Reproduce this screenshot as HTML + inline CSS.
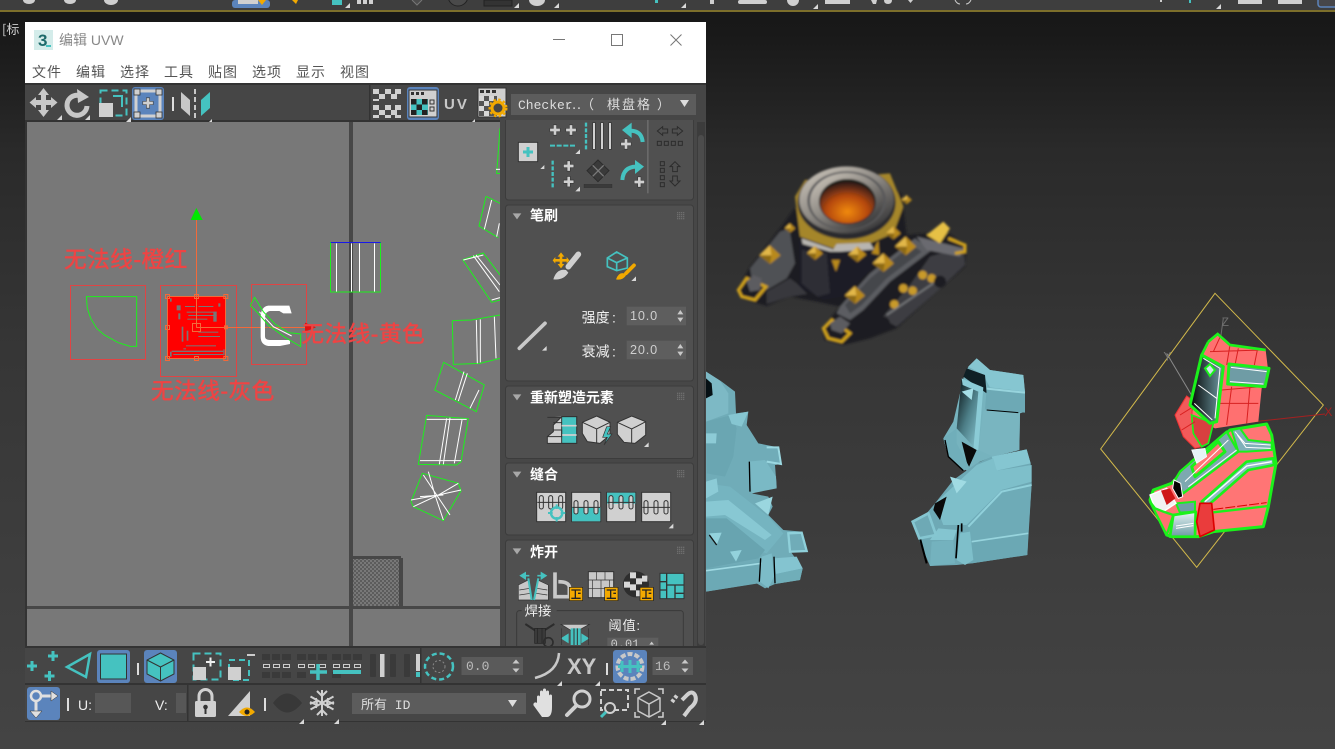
<!DOCTYPE html>
<html><head><meta charset="utf-8"><style>
html,body{margin:0;padding:0;width:1335px;height:749px;overflow:hidden;background:#222}
svg{display:block}
text{font-family:"Liberation Sans","Noto Sans CJK SC",sans-serif}
.m{font-family:"Liberation Mono","Noto Sans CJK SC",monospace}
.c{font-family:"Noto Sans CJK SC","Liberation Sans",sans-serif}
</style></head><body>
<svg width="1335" height="749" viewBox="0 0 1335 749" xmlns="http://www.w3.org/2000/svg">
<defs>
<linearGradient id="bg" gradientUnits="userSpaceOnUse" x1="0" y1="12" x2="0" y2="749"><stop offset="0" stop-color="#181818"/><stop offset=".03" stop-color="#191919"/><stop offset=".19" stop-color="#2a2a2a"/><stop offset=".46" stop-color="#363636"/><stop offset=".8" stop-color="#3f3f3f"/><stop offset="1" stop-color="#444"/></linearGradient>
<radialGradient id="fire" cx=".5" cy=".72" r=".7"><stop offset="0" stop-color="#f08a10"/><stop offset=".55" stop-color="#b5480f"/><stop offset="1" stop-color="#331c18"/></radialGradient>
<linearGradient id="ringg" x1="0" y1="0" x2=".8" y2="1"><stop offset="0" stop-color="#d2cbc0"/><stop offset=".5" stop-color="#8f8b85"/><stop offset="1" stop-color="#333335"/></linearGradient>
<linearGradient id="blk" x1="0" y1="0" x2="1" y2="0"><stop offset="0" stop-color="#050505"/><stop offset="1" stop-color="#6f9da5"/></linearGradient>
<linearGradient id="blk2" x1="0" y1=".1" x2=".8" y2=".85"><stop offset="0" stop-color="#0a1518"/><stop offset=".55" stop-color="#4d7e87"/><stop offset="1" stop-color="#7db9c4"/></linearGradient>
<linearGradient id="boxg" x1="0" y1="0" x2="0" y2="1"><stop offset="0" stop-color="#e8f4f5"/><stop offset="1" stop-color="#6b9aa3"/></linearGradient>
<pattern id="chk" width="4" height="4" patternUnits="userSpaceOnUse"><rect width="4" height="4" fill="#787878"/><rect width="2" height="2" fill="#5c5c5c"/><rect x="2" y="2" width="2" height="2" fill="#5c5c5c"/></pattern>
<filter id="bl2" x="-5%" y="-5%" width="110%" height="110%"><feGaussianBlur stdDeviation="3.500"/></filter>
<clipPath id="cv"><rect x="27" y="122" width="473" height="525"/></clipPath>
<clipPath id="pn"><rect x="500" y="120" width="206" height="527"/></clipPath>
<clipPath id="vp"><rect x="706" y="0" width="629" height="749"/></clipPath>
<path id="tri" d="M0 0l-5 5h5z" fill="#d8d8d8"/>
<path id="pl" d="M-2-6.500h4v4.500h4.500v4h-4.500v4.500h-4v-4.500h-4.500v-4h4.500z" fill="#d0d0d0" stroke="#333" stroke-width=".7"/>
<path id="plt" d="M-1.500-5h3v3.500h3.500v3h-3.500v3.500h-3v-3.500h-3.500v-3h3.500z" fill="#45c2c0"/>
<g id="grip" fill="#6d6d6d"><rect x="-10" y="-10" width="4" height="4"/><rect x="-4" y="-10" width="4" height="4"/><rect x="2" y="-10" width="4" height="4"/><rect x="8" y="-10" width="4" height="4"/><rect x="-10" y="-4" width="4" height="4"/><rect x="-4" y="-4" width="4" height="4"/><rect x="2" y="-4" width="4" height="4"/><rect x="8" y="-4" width="4" height="4"/><rect x="-10" y="2" width="4" height="4"/><rect x="-4" y="2" width="4" height="4"/><rect x="2" y="2" width="4" height="4"/><rect x="8" y="2" width="4" height="4"/><rect x="-10" y="8" width="4" height="4"/><rect x="-4" y="8" width="4" height="4"/><rect x="2" y="8" width="4" height="4"/><rect x="8" y="8" width="4" height="4"/></g>
<g id="pyr"><path d="M-32 0L0-30L32 0L0 26z" fill="#b8891e"/><path d="M-32 0L0-30L4 0z" fill="#e2b748"/><path d="M4 0L0 26L-32 0z" fill="#8d6a18"/></g>
<path id="stud" d="M-13 0a13 13 0 1 1 26 0a13 13 0 1 1-26 0" fill="#c89a2a"/>
</defs>

<!-- viewport background -->
<rect width="1335" height="749" fill="url(#bg)"/>
<rect x="0" y="0" width="1335" height="10" fill="#3e3e3e"/>
<rect x="0" y="10" width="1335" height="2" fill="#7d6f2b"/>
<!-- top toolbar remnants -->
<g fill="#cfcfcf"><ellipse cx="29" cy="0" rx="6" ry="4"/><ellipse cx="70" cy="0" rx="6" ry="4"/><ellipse cx="111" cy="0" rx="7" ry="5"/><ellipse cx="537" cy="0" rx="8" ry="6"/></g>
<rect x="232" y="0" width="38" height="8" rx="3" fill="#5b84bc"/><rect x="238" y="0" width="20" height="4" fill="#d0d0d0"/><path d="M258 0l4 5 4-5z" fill="#f2a900"/>
<path d="M292 0l4 4 2-4z" fill="#f2a900"/><rect x="332" y="0" width="10" height="5" fill="#45c2c0"/><use href="#tri" x="350" y="3"/>
<g fill="#d0d0d0"><rect x="357" y="0" width="4" height="4"/><rect x="363" y="0" width="4" height="4"/><rect x="369" y="0" width="4" height="4"/></g>
<path d="M412 0l5 5 5-5" fill="#4c4c4c" stroke="#777"/><circle cx="458" cy="-4" r="10" fill="#4a4a4a" stroke="#222"/>
<rect x="484" y="0" width="28" height="6" fill="#333" stroke="#222"/><use href="#tri" x="519" y="3"/><use href="#tri" x="559" y="3"/><use href="#tri" x="686" y="3"/><rect x="655" y="0" width="3" height="3" fill="#45c2c0"/>
<g fill="#cfcfcf"><rect x="710" y="0" width="4" height="4"/><rect x="738" y="0" width="29" height="4" rx="2"/><circle cx="793" cy="0" r="6"/><rect x="825" y="0" width="25" height="4"/><path d="M871 0l2 4h3l1-4zM884 0q0 4 4 4t4-4z"/><path d="M908 0l2.500 3 2.500-3z"/><path d="M955 0q2 4 5 4M971 0q-2 4-5 4" stroke="#cfcfcf" fill="none"/><rect x="1160" y="0" width="2" height="2"/><rect x="1238" y="0" width="24" height="4"/><rect x="1278" y="0" width="24" height="4"/></g>
<use href="#tri" x="818" y="4"/><use href="#tri" x="1221" y="4"/><rect x="1189" y="0" width="2" height="3" fill="#45c2c0"/>
<rect x="1318" y="-4" width="30" height="11" rx="3" fill="#46464a" stroke="#5b84bc" stroke-width="1.500"/>
<text x="2" y="34" class="c" font-size="13" fill="#cfcfcf">[标</text>

<!-- 3D objects -->
<g clip-path="url(#vp)">
<!-- tower -->
<g transform="translate(730,150) scale(.33333)">
<g filter="url(#bl2)">
<path d="M22 420L60 350L150 235L190 180L350 60L515 130L530 255L650 245L710 290L705 350L620 425L500 535L420 565L340 585L285 570L275 535L330 470L260 455L180 440L110 468L50 450z" fill="#1f1f22"/>
<path d="M60 355L150 245L178 235L195 340L170 385L110 420L65 385z" fill="#505155"/>
<path d="M110 425L180 385L200 400L232 432L180 440L110 462z" fill="#38383c"/>
<path d="M205 270L320 295L430 290L440 340L340 440L280 450L210 410z" fill="#1d1d25"/>
<path d="M215 300L290 310L300 430L262 440L215 400z" fill="#2d2d36"/>
<path d="M330 470L420 370L555 265L605 300L480 395L400 480L360 510L320 490z" fill="#5c5d62"/>
<path d="M345 465L420 385L545 285L575 305L470 385L395 465L360 490z" fill="#45464b"/>
<path d="M455 505L540 405L600 320L700 290L705 345L620 425L500 530z" fill="#3c3d43"/>
<path d="M560 260L700 295L690 320L590 300z" fill="#6a6b70"/>
<path d="M195 140L225 90L480 70L520 170L490 250L420 280L310 295L210 260z" fill="#a5862a"/>
<path d="M215 265L310 298L320 282L420 278L432 298L330 305L300 305L218 282z" fill="#b8b5b0"/>
<ellipse cx="350" cy="158" rx="147" ry="110" fill="#2a2a2d"/>
<ellipse cx="350" cy="150" rx="142" ry="100" fill="url(#ringg)"/>
<ellipse cx="350" cy="152" rx="118" ry="88" fill="#59585a"/>
<ellipse cx="350" cy="153" rx="110" ry="84" fill="url(#ringg)"/>
<ellipse cx="352" cy="155" rx="85" ry="68" fill="#1f1a18"/>
<ellipse cx="352" cy="158" rx="81" ry="62" fill="url(#fire)"/>
<path d="M25 420L50 385L108 410L75 450L35 440z" fill="none" stroke="#d0a21f" stroke-width="9"/>
<path d="M280 535L305 510L360 550L335 575L295 565z" fill="none" stroke="#d0a21f" stroke-width="9"/>
<path d="M655 265L705 285L705 305L675 310" fill="none" stroke="#d0a21f" stroke-width="9"/>
<path d="M50 395L70 375L95 385L90 420L60 425z" fill="#5c5c60"/><path d="M300 520L330 500L360 520L335 550L305 540z" fill="#5c5c60"/>
<use href="#pyr" transform="translate(120,316)"/><use href="#pyr" transform="translate(375,437) scale(.95)"/><use href="#pyr" transform="translate(460,340)"/><use href="#pyr" transform="translate(527,290)"/>
<use href="#pyr" transform="translate(255,310) scale(.75)"/><use href="#pyr" transform="translate(382,314) scale(.85)"/><use href="#pyr" transform="translate(490,250) scale(.7)"/><use href="#pyr" transform="translate(530,150) scale(.5)"/><use href="#pyr" transform="translate(180,235) scale(.5)"/>
<path d="M590 255L640 215L660 235L630 280z" fill="#e6c044"/>
<path d="M305 330L330 330L318 365z" fill="#b8891e"/><path d="M425 310L445 270L448 315z" fill="#b8891e"/>
<use href="#stud" x="520" y="415"/><use href="#stud" x="548" y="422"/><use href="#stud" x="578" y="375"/><use href="#stud" x="605" y="385"/><use href="#stud" x="493" y="463"/>
<path d="M470 495L610 400" stroke="#77787a" stroke-width="5"/>
<circle cx="460" cy="520" r="20" fill="#1c1c20"/><circle cx="630" cy="395" r="18" fill="#1c1c20"/>
</g></g>

<!-- teal objects -->
<g transform="translate(700,350) scale(.33333)">
<!-- left object -->
<path d="M18 65L65 95L105 125L108 190L145 185L140 225L175 280L235 292L243 342L225 345L230 410L155 430L205 440L218 470L205 495L250 540L305 545L322 605L272 605L308 655L300 690L225 702L195 715L170 700L18 725z" fill="#70acb8"/>
<path d="M18 65L60 92L85 130L85 190L18 215z" fill="#7db9c5"/>
<path d="M18 85L35 100L38 135L18 145z" fill="#061014"/>
<path d="M18 215L95 195L110 235L100 320L75 380L20 370z" fill="#6aa6b2"/>
<path d="M85 195L145 185L125 230L95 222z" fill="#86c6d1"/>
<path d="M18 250L50 250L48 280L18 280z" fill="#8dcbd6"/>
<path d="M145 335L195 330L228 380L230 415L155 430z" fill="#7ab9c5"/>
<path d="M148 335L150 425" stroke="#000" stroke-width="4"/>
<path d="M18 400L90 410L205 500L250 550L200 610L18 555z" fill="#75b4c0"/>
<path d="M18 455L85 450L215 555L195 570L75 495L18 500z" fill="#88c8d3"/>
<path d="M165 460L218 440L205 495z" fill="#9ad6df"/><path d="M18 395L50 385L55 425L18 445z" fill="#8ccbd6"/>
<path d="M18 505L80 505L195 600L175 625L18 655z" fill="#68a4b0"/>
<path d="M28 550L65 548L50 585z" fill="#93d2dc"/><path d="M28 555L50 585" stroke="#111" stroke-width="4"/>
<path d="M90 605L125 600L108 635z" fill="#93d2dc"/>
<path d="M18 655L185 635L175 700L18 725z" fill="#6ca9b5"/><path d="M18 662L185 640" stroke="#a0dae3" stroke-width="5"/>
<path d="M220 625L290 620L308 655L228 672z" fill="#84c4d0"/><path d="M228 672L308 655L300 690L225 702z" fill="#70aeb9"/>
<path d="M185 620L215 610L222 680L205 715L180 695z" fill="#7cbcc8"/>
<path d="M178 695L182 625M222 620L225 700" stroke="#000" stroke-width="4"/>
<path d="M265 550L305 548L320 603L270 605z" fill="none" stroke="#8fd0da" stroke-width="7"/>
<path d="M200 292L235 292L243 342L200 335" fill="none" stroke="#9bd8e1" stroke-width="6"/>

<!-- right object -->
<path d="M805 50L830 25L870 60L970 75L975 130L975 185L960 190L958 300L880 320L840 335L800 362L770 335L745 320L730 265L760 215L780 130L790 85z" fill="#76b3be"/>
<path d="M805 50L830 25L870 60L970 75L975 125L870 112L850 75z" fill="#86c6d1"/>
<path d="M800 55L855 75L860 130L790 80z" fill="#0f2025"/>
<path d="M860 118L975 128L975 188L855 178z" fill="#6da9b5"/><path d="M860 116L975 128" stroke="#97d4dd" stroke-width="6"/>
<path d="M785 85L848 115L830 300L770 235z" fill="url(#blk2)"/>
<path d="M785 85L850 112L835 300L820 300L835 125L788 105z" fill="#8bcbd6"/>
<path d="M785 125L820 115L815 150z" fill="#a5dfe7"/>
<path d="M850 180L960 190L958 300L880 320L835 300z" fill="#79b5c0"/>
<path d="M860 180L955 188" stroke="#000" stroke-width="3"/>
<path d="M785 275L830 300L805 355z" fill="#0a0a0a"/><path d="M770 235L730 265L745 320L790 362L810 355L770 280z" fill="#70aeba"/><path d="M735 270L745 320L790 362" stroke="#000" stroke-width="4" fill="none"/>
<path d="M875 320L980 298L992 340L995 400L982 615L815 640L770 645L690 648L665 590L635 515L680 490L705 460L760 390L830 340z" fill="#6ea9b5"/>
<path d="M875 320L980 298L992 340L890 362z" fill="#85c6d1"/>
<path d="M830 345L880 325L890 362L995 345L995 395L905 420L800 525L730 525L705 460z" fill="#7ebfca"/>
<path d="M800 525L905 420L995 400L985 550L815 575z" fill="#6eabb7"/><path d="M805 530L905 425L995 405" stroke="#90d0da" stroke-width="6" fill="none"/>
<path d="M750 380L800 395L770 430z" fill="#a0dbe3"/>
<path d="M705 460L740 440L720 510L700 480z" fill="#0a0a0a"/>
<path d="M815 575L985 550L982 615L815 640z" fill="#6ba8b4"/><path d="M815 575L985 550" stroke="#97d4dd" stroke-width="5"/>
<path d="M695 575L760 570L765 640L690 648z" fill="#74b2be"/><path d="M690 570L760 570L770 540L715 535z" fill="#84c5d0"/>
<path d="M780 550L810 545L820 630L795 645L770 630z" fill="#7ebfca"/><path d="M775 525L768 625M785 520V545" stroke="#000" stroke-width="5"/>
<path d="M660 565L680 640" stroke="#000" stroke-width="6"/>
<path d="M638 515L685 490L708 555L658 565z" fill="none" stroke="#85c6d1" stroke-width="8"/>
</g>

<!-- selected object -->
<g transform="translate(1095,290) scale(.33333)">
<path d="M360 10L685 345L305 832L17 477z" fill="none" stroke="#d2b94b" stroke-width="3"/>
<path d="M385 85L345 370" stroke="#6e6e6e" stroke-width="3"/><text x="380" y="108" font-size="36" fill="#6e6e6e">Z</text>
<path d="M215 190L340 400" stroke="#8a8a8a" stroke-width="3"/><text x="205" y="212" font-size="36" fill="#777">Y</text>
<path d="M340 410L690 372" stroke="#a52020" stroke-width="3"/><text x="688" y="378" font-size="36" fill="#a52020">X</text>
<path d="M340 155L368 132L405 165L512 180L518 230L500 295L490 395L360 415L290 380L320 190z" fill="#ff7070"/>
<path d="M240 375L275 318L292 330L290 395L320 470L300 475L265 440z" fill="#f25a5a" stroke="#e33" stroke-width="3"/>
<path d="M290 375L355 400L340 460L320 470L295 430z" fill="#d84040" stroke="#1bf11b" stroke-width="5"/>
<g stroke="#d82020" stroke-width="3" fill="none"><path d="M345 185L500 180M378 135L355 185M405 165L395 225M430 175L420 225M487 180L478 225M380 300L500 290M370 340L490 340M410 290L395 405M465 290L455 400M255 375L295 350M260 420L300 395"/></g>
<path d="M320 195L385 230L365 395L345 400L285 345z" fill="url(#blk)" stroke="#1bf11b" stroke-width="9" stroke-linejoin="round"/>
<path d="M325 205L375 235L360 385M310 285L365 325M298 340L352 390" stroke="#fff" stroke-width="3" fill="none"/>
<path d="M330 235L345 222L360 240L345 258z" fill="#cfe5e8" stroke="#1bf11b" stroke-width="6"/>
<path d="M402 222L522 235L510 290L398 282z" fill="#6f9ca5" stroke="#1bf11b" stroke-width="9" stroke-linejoin="round"/>
<path d="M408 232L515 245M405 275L505 282" stroke="#fff" stroke-width="3"/>
<path d="M340 155L368 132L405 165L512 180" fill="none" stroke="#1bf11b" stroke-width="8"/>
<path d="M320 195L340 155" stroke="#1bf11b" stroke-width="8"/>
</g>
<!-- lower body of selected object, coordinates from a close crop -->
<g transform="translate(1150,420) scale(.33333)">
<path d="M240 30L350 12L365 45L378 130L355 260L340 320L190 335L145 350L65 350L50 345L0 240L10 210L65 190L125 125z" fill="#ff7575" stroke="#1bf11b" stroke-width="9" stroke-linejoin="round"/>
<path d="M245 30L270 25L295 60L365 68L365 90L290 95L265 95z" fill="#7fb0b9" stroke="#1bf11b" stroke-width="6" stroke-linejoin="round"/>
<path d="M255 35L285 70L362 75M262 45L288 82L362 85" fill="none" stroke="#fff" stroke-width="3"/>
<path d="M75 180L90 155L230 35L265 95L100 220z" fill="#7da8b0" stroke="#1bf11b" stroke-width="7" stroke-linejoin="round"/>
<path d="M125 140L205 65L225 95L135 170z" fill="#ff7575" stroke="#1bf11b" stroke-width="9" stroke-linejoin="round"/>
<path d="M105 185L235 60M115 200L260 90" stroke="#fff" stroke-width="3" fill="none"/>
<path d="M155 245L290 125L370 115L372 135L295 150L170 260z" fill="#8ebcc5" stroke="#1bf11b" stroke-width="8" stroke-linejoin="round"/>
<path d="M165 245L290 138L365 125" stroke="#fff" stroke-width="4" fill="none"/>
<path d="M72 180L92 190L98 230L85 235L68 205z" fill="#050505" stroke="#fff" stroke-width="3"/>
<path d="M125 90L165 85L170 110L140 130z" fill="#e6f4f6" stroke="#fff" stroke-width="2"/>
<path d="M78 250L135 245V275L90 278z" fill="#6f9ea7" stroke="#1bf11b" stroke-width="6"/>
<path d="M0 225L50 205L78 250L40 275L15 265z" fill="#f2f2f2" stroke="#fff" stroke-width="4"/>
<path d="M33 212L60 205L76 235L50 255z" fill="#cf1818"/>
<path d="M0 245L15 265L40 275L70 285L50 345z" fill="#ff7070" stroke="#1bf11b" stroke-width="7" stroke-linejoin="round"/>
<path d="M70 285L137 275L135 350L60 350z" fill="url(#boxg)" stroke="#1bf11b" stroke-width="8" stroke-linejoin="round"/>
<path d="M78 318L130 310M78 325L130 317" stroke="#fff" stroke-width="3"/>
<path d="M150 250L185 250L193 330L150 350L140 305z" fill="#ea3c3c" stroke="#d00" stroke-width="5" stroke-linejoin="round"/>
<path d="M190 277L355 258" stroke="#1bf11b" stroke-width="7"/><path d="M190 268L350 248" stroke="#d00" stroke-width="3" stroke-dasharray="30 6"/>
</g>
</g>

<!-- WINDOW -->
<rect x="25" y="22" width="681" height="700" fill="#464646"/>
<rect x="25" y="22" width="681" height="62" fill="#fff"/>
<rect x="34" y="30" width="19" height="20" fill="#d4ecea"/>
<text x="38" y="46" font-size="17" font-weight="bold" fill="#1d6a6a">3</text><rect x="46" y="45" width="5" height="2" fill="#45c2c0"/>
<text x="59" y="45" font-size="14" fill="#888">编辑 UVW</text>
<rect x="553" y="39" width="12" height="1" fill="#777"/>
<rect x="611.500" y="34.500" width="11" height="11" fill="none" stroke="#777"/>
<path d="M670.500 34.500l11 11m0-11l-11 11" stroke="#777"/>
<g font-size="14" fill="#555" letter-spacing="1"><text x="32" y="77">文件</text><text x="76" y="77">编辑</text><text x="120" y="77">选择</text><text x="164" y="77">工具</text><text x="208" y="77">贴图</text><text x="252" y="77">选项</text><text x="296" y="77">显示</text><text x="340" y="77">视图</text></g>

<!-- top tool row -->
<rect x="25" y="83" width="681" height="2" fill="#333"/>
<rect x="25" y="120" width="681" height="2" fill="#333"/>
<path d="M43.500 88L49 95H46V100H51V97L57.500 102.500L51 108V105H46V110H49L43.500 117L38 110H41V105H36V108L29.500 102.500L36 97V100H41V95H38Z" fill="#c8c8c8"/>
<path d="M79 95.500A10 10 0 1 0 87 106" fill="none" stroke="#c8c8c8" stroke-width="5"/><path d="M77 89L89 97L78 103z" fill="#c8c8c8"/>
<use href="#tri" x="62" y="115"/><use href="#tri" x="90" y="115"/>
<rect x="100.500" y="90.500" width="26" height="25" fill="none" stroke="#45c2c0" stroke-width="2" stroke-dasharray="7 4"/>
<path d="M113 96h9v11" fill="none" stroke="#45c2c0" stroke-width="2"/>
<rect x="99" y="103" width="14" height="14" fill="#d0d0d0"/>
<use href="#tri" x="131" y="117"/>
<rect x="132" y="87" width="32" height="33" rx="3" fill="#5b84bc"/>
<rect x="136" y="91" width="24" height="25" fill="#5b84bc" stroke="#d0d0d0" stroke-width="3"/>
<g fill="#d0d0d0" stroke="#333" stroke-width=".8"><rect x="134" y="89" width="6" height="6"/><rect x="156" y="89" width="6" height="6"/><rect x="134" y="112" width="6" height="6"/><rect x="156" y="112" width="6" height="6"/></g>
<use href="#pl" transform="translate(148,103) scale(.8)"/>
<rect x="172" y="97" width="2" height="14" fill="#ddd"/>
<path d="M181 92L190 100V116L181 108z" fill="#c8c8c8"/><path d="M195 89V118" stroke="#c8c8c8" stroke-width="2" stroke-dasharray="5 3"/><path d="M201 100L210 92V108L201 116z" fill="#45c2c0"/>
<use href="#tri" x="212" y="119"/>
<rect x="369" y="85" width="1.500" height="35" fill="#333"/>
<g fill="#d0d0d0"><rect x="373" y="89" width="6" height="5"/><rect x="385" y="89" width="6" height="5"/><rect x="395" y="89" width="6" height="5"/><rect x="379" y="94" width="6" height="5"/><rect x="391" y="94" width="6" height="5"/><rect x="373" y="99" width="6" height="2"/><rect x="373" y="105" width="6" height="5"/><rect x="385" y="105" width="6" height="5"/><rect x="395" y="105" width="6" height="5"/><rect x="379" y="110" width="6" height="5"/><rect x="391" y="110" width="6" height="5"/><rect x="373" y="115" width="6" height="3"/><rect x="385" y="115" width="6" height="3"/><rect x="395" y="115" width="6" height="3"/></g>
<rect x="407" y="87" width="32" height="33" rx="3" fill="#5b84bc"/>
<rect x="409" y="90" width="28" height="27" fill="#d0d0d0" stroke="#333"/>
<rect x="411" y="92" width="3" height="3" fill="#333"/><rect x="416" y="92" width="3" height="3" fill="#333"/><rect x="421" y="92" width="3" height="3" fill="#333"/>
<rect x="411" y="99" width="17" height="16" fill="#45c2c0"/><g fill="#222"><rect x="411" y="99" width="5.500" height="5.500"/><rect x="422" y="99" width="5.500" height="5.500"/><rect x="416.500" y="104.500" width="5.500" height="5.500"/><rect x="411" y="110" width="5.500" height="5"/><rect x="422" y="110" width="5.500" height="5"/></g>
<rect x="430" y="100" width="4" height="4" fill="none" stroke="#333"/><rect x="430" y="107" width="4" height="4" fill="none" stroke="#333"/>
<text x="444" y="109" font-size="15" font-weight="bold" fill="#c8c8c8" letter-spacing="2">UV</text>
<use href="#tri" x="475" y="119"/>
<rect x="478" y="88" width="28" height="29" fill="#d0d0d0" stroke="#333"/><g fill="#333"><rect x="480" y="90" width="4" height="3"/><rect x="486" y="90" width="4" height="3"/><rect x="492" y="90" width="4" height="3"/></g>
<rect x="479" y="96" width="18" height="20" fill="#555"/><g fill="#d8d8d8"><rect x="479" y="96" width="5" height="5"/><rect x="489" y="96" width="5" height="5"/><rect x="484" y="101" width="5" height="5"/><rect x="479" y="106" width="5" height="5"/><rect x="484" y="111" width="5" height="5"/></g>
<circle cx="498" cy="108" r="6" fill="#464646" stroke="#f2a900" stroke-width="3"/><circle cx="498" cy="108" r="8.500" fill="none" stroke="#f2a900" stroke-width="2" stroke-dasharray="2.500 2.500"/>
<rect x="511" y="94" width="185" height="21" fill="#5c5c5c"/>
<text y="109" class="m" font-size="13" fill="#ddd"><tspan x="518">Checker</tspan><tspan x="567" class="c">⋯</tspan><tspan x="581" class="c">（</tspan><tspan x="607" class="c" letter-spacing="2">棋盘格</tspan><tspan x="657" class="c">）</tspan></text>
<path d="M680 100h9l-4.500 7z" fill="#ddd"/>

<!-- canvas -->
<rect x="27" y="122" width="473" height="525" fill="#787878"/>
<g clip-path="url(#cv)">
<rect x="349" y="122" width="4" height="525" fill="#474747"/>
<rect x="27" y="606" width="473" height="3" fill="#474747"/>
<rect x="353" y="559" width="46" height="47" fill="url(#chk)"/>
<rect x="353" y="556" width="48" height="3" fill="#474747"/><rect x="399" y="558" width="4" height="48" fill="#474747"/>
<g transform="translate(50,200) scale(.33333)">
<rect x="61.500" y="256.500" width="225" height="222" fill="none" stroke="#e04444" stroke-width="3"/>
<rect x="331.500" y="256.500" width="228" height="273" fill="none" stroke="#e04444" stroke-width="3"/>
<rect x="604.500" y="253.500" width="165" height="240" fill="none" stroke="#e04444" stroke-width="3"/>
<path d="M109 290H260V439H240L205 428L163 405L140 385L122 355L112 325z" fill="none" stroke="#1df01d" stroke-width="3"/>
<rect x="352" y="290" width="175" height="184" fill="#f00"/>
<g fill="#777"><rect x="380" y="316" width="12" height="15"/><rect x="405" y="318" width="30" height="3"/><rect x="445" y="318" width="45" height="3"/><rect x="505" y="310" width="6" height="10"/><rect x="385" y="340" width="6" height="18"/><rect x="410" y="335" width="90" height="3"/><rect x="415" y="345" width="85" height="3"/><rect x="490" y="335" width="10" height="30"/><rect x="412" y="356" width="60" height="3"/><rect x="395" y="380" width="5" height="45"/><rect x="410" y="392" width="5" height="30"/><rect x="445" y="395" width="60" height="3"/><rect x="445" y="408" width="65" height="3"/><rect x="408" y="436" width="90" height="3"/><rect x="365" y="452" width="155" height="4"/><rect x="370" y="462" width="150" height="3"/><rect x="360" y="455" width="5" height="15"/><rect x="520" y="448" width="4" height="18"/><rect x="360" y="295" width="5" height="10"/><rect x="400" y="445" width="8" height="3"/></g>
<g stroke="#f26a3a" stroke-width="3" fill="none"><rect x="352.500" y="289.500" width="174" height="186"/><rect x="346.500" y="283.500" width="12" height="12"/><rect x="433.500" y="283.500" width="12" height="12"/><rect x="521.500" y="283.500" width="12" height="12"/><rect x="346.500" y="376.500" width="12" height="12"/><rect x="346.500" y="469.500" width="12" height="12"/><rect x="433.500" y="469.500" width="12" height="12"/><rect x="521.500" y="469.500" width="12" height="12"/><rect x="427.500" y="370.500" width="24" height="24"/><path d="M439.500 60V383M439 382.500H770"/></g>
<rect x="522" y="376" width="12" height="12" fill="#f26a3a"/>
<path d="M439 24L458 60H422z" fill="#00e800"/>
<path d="M765 368L798 382L765 395z" fill="#e01010"/>
<path d="M632 352Q632 320 655 317H718L725 340H700L688 333H660Q645 335 645 355V410Q645 420 660 420H720V432L690 438H655Q632 435 632 410z" fill="#fff"/>
<path d="M651 355V412M655 355V412" stroke="#787878" stroke-width="2"/>
<path d="M601 316L614 292L640 335L675 372L715 398L752 402V440L705 412L655 375L620 335z" fill="none" stroke="#1df01d" stroke-width="3"/>
<path d="M628 335L670 380L725 408" stroke="#fff" stroke-width="3" fill="none"/>
<rect x="841.500" y="127.500" width="150" height="148.500" fill="none" stroke="#1df01d" stroke-width="3"/>
<rect x="842" y="126" width="150" height="3" fill="#1818e8"/>
<path d="M859.500 130V275M904.500 130V275M928.500 130V275M973.500 130V275" stroke="#fff" stroke-width="3"/>
<g class="c" font-size="68" fill="#ee4444" stroke="#ee4444" stroke-width="1.500" letter-spacing="1.500"><text x="42" y="203">无法线-橙红</text><text x="303" y="597">无法线-灰色</text><text x="754" y="426">无法线-黄色</text></g>
</g>
<g transform="translate(400,125) scale(.33333)" fill="none" stroke-width="3">
<g stroke="#1df01d"><path d="M300 10L290 145H300"/><path d="M258 214L237 303L295 338M258 214L300 235"/><path d="M188 404L250 384L300 450M188 404L275 532L300 525"/><path d="M157 587L215 585L300 570M157 587L160 718L240 715L300 700"/><path d="M131 712L253 780L229 860L104 795z"/><path d="M80 871L205 881L183 1010L170 1020L55 1018z"/><path d="M67 1045L175 1075L183 1097L130 1187L40 1145L33 1130z"/></g>
<g stroke="#fff"><path d="M288 133H300"/><path d="M275 225L253 313M298 295L290 335"/><path d="M190 405L250 390M220 392L298 500M228 390L300 480M275 525L300 518"/><path d="M229 585L232 715M241 583V712M283 575L288 700"/><path d="M192 740L166 825M202 745L175 828M237 795L210 850"/><path d="M80 883H200M150 878L130 1018M140 880L118 1018M186 885L163 1015M60 1007H183"/><path d="M85 1040L105 1110L130 1185M70 1050L150 1170M33 1125L115 1110L183 1095M40 1145L115 1110L175 1075M60 1115L130 1110"/></g>
</g>
</g>
<rect x="25" y="122" width="2" height="525" fill="#333"/>

<!-- right panel -->
<rect x="500" y="120" width="206" height="527" fill="#474747"/>
<rect x="697" y="122" width="8" height="525" fill="#3c3c3c"/><rect x="698" y="135" width="6" height="510" rx="3" fill="#4c4c4c"/>
<g clip-path="url(#pn)">
<g fill="#505050" stroke="#3c3c3c"><rect x="505.500" y="110" width="188" height="90" rx="3"/><rect x="505.500" y="205" width="188" height="176" rx="3"/><rect x="505.500" y="386" width="188" height="72.500" rx="3"/><rect x="505.500" y="463" width="188" height="72" rx="3"/><rect x="505.500" y="540" width="188" height="130" rx="3"/></g>
<g transform="translate(500,120) scale(.33333)">
<rect x="55" y="67" width="58" height="58" fill="#d0d0d0" stroke="#333" stroke-width="3"/><use href="#plt" transform="translate(84,96) scale(3)"/>
<use href="#tri" transform="translate(133,135) scale(2.400)"/>
<use href="#pl" transform="translate(165,30) scale(2.400)"/><use href="#pl" transform="translate(213,30) scale(2.400)"/>
<path d="M150 77H230" stroke="#45c2c0" stroke-width="6" stroke-dasharray="15 5"/><use href="#tri" transform="translate(240,88) scale(2.800)"/>
<path d="M258 8V88" stroke="#45c2c0" stroke-width="7" stroke-dasharray="12 5"/>
<g fill="#d0d0d0" stroke="#333" stroke-width="2"><rect x="278" y="8" width="8" height="80"/><rect x="302" y="8" width="8" height="80"/><rect x="326" y="8" width="8" height="80"/></g>
<path d="M428 66Q425 30 385 32" fill="none" stroke="#45c2c0" stroke-width="12"/><path d="M366 30L395 8V54z" fill="#45c2c0"/><use href="#pl" transform="translate(378,72) scale(2.400)"/>
<path d="M367 180Q370 140 410 140" fill="none" stroke="#45c2c0" stroke-width="12"/><path d="M432 140L405 120V162z" fill="#45c2c0"/><use href="#pl" transform="translate(418,186) scale(2.400)"/>
<rect x="441" y="0" width="5" height="220" fill="#6a6a6a"/>
<g fill="#505050" stroke="#2c2c2c" stroke-width="3"><path d="M472 33L488 20V27H503V39H488V46z"/><path d="M548 33L532 20V27H517V39H532V46z"/><path d="M525 125L540 140H532V155H518V140H510z"/><path d="M525 198L540 183H532V168H518V183H510z"/></g>
<g fill="none" stroke="#2c2c2c" stroke-width="3"><rect x="472" y="64" width="12" height="12"/><rect x="493" y="64" width="12" height="12"/><rect x="514" y="64" width="12" height="12"/><rect x="535" y="64" width="12" height="12"/><rect x="481" y="125" width="12" height="12"/><rect x="481" y="145" width="12" height="12"/><rect x="481" y="167" width="12" height="12"/><rect x="481" y="188" width="12" height="12"/></g>
<path d="M158 122V202" stroke="#45c2c0" stroke-width="7" stroke-dasharray="12 5"/>
<use href="#pl" transform="translate(206,138) scale(2.400)"/><use href="#pl" transform="translate(206,185) scale(2.400)"/><use href="#tri" transform="translate(240,200) scale(2.800)"/>
<path d="M294 120L327 152L294 185L261 152z" fill="#3a3a3a" stroke="#2c2c2c" stroke-width="3"/><path d="M278 136L311 169M278 169L311 136" stroke="#7a7a7a" stroke-width="4"/>
<rect x="252" y="193" width="84" height="10" fill="#3a3a3a" stroke="#2c2c2c"/>
<!-- brush -->
<path d="M38 280H64L51 298z" fill="#a8a8a8"/>
<text x="90" y="302" class="c" font-size="42" font-weight="bold" fill="#fff">笔刷</text>
<use href="#grip" x="541" y="286"/>
<path d="M235 403L205 440" stroke="#d0d0d0" stroke-width="17" stroke-linecap="round"/><path d="M160 478Q170 445 198 450L205 458Q190 482 160 478z" fill="#d0d0d0"/>
<path d="M183 397L193 410H187V417H200V411L208 421L200 431V425H187V432H193L183 445L173 432H179V425H166V431L158 421L166 411V417H179V410H173z" fill="#f2a900"/>
<path d="M350 396L382 414V444L350 452L322 440V414z" fill="none" stroke="#45c2c0" stroke-width="5"/><path d="M322 414L350 428L382 414M350 428V452" fill="none" stroke="#45c2c0" stroke-width="5"/>
<path d="M402 436L378 460" stroke="#f2a900" stroke-width="11" stroke-linecap="round"/><path d="M348 478Q356 456 372 460L378 466Q368 482 348 478z" fill="#f2a900"/>
<use href="#tri" transform="translate(408,469) scale(2.800)"/>
<path d="M58 685L135 610" stroke="#c8c8c8" stroke-width="11" stroke-linecap="round"/><use href="#tri" transform="translate(140,678) scale(2.800)"/>
<g class="c" font-size="42" fill="#f0f0f0"><text x="245" y="608"><tspan>强度</tspan><tspan x="336">:</tspan></text><text x="245" y="710"><tspan>衰减</tspan><tspan x="336">:</tspan></text></g>
<rect x="380" y="560" width="178" height="56" fill="#5e5e5e"/><rect x="380" y="662" width="178" height="56" fill="#5e5e5e"/>
<g class="m" font-size="38" fill="#cfcfcf"><text x="390" y="600" letter-spacing="2.500">10.0</text><text x="390" y="702" letter-spacing="2.500">20.0</text></g>
<path d="M541 570l9 13h-18zM541 606l9-13h-18zM541 672l9 13h-18zM541 708l9-13h-18z" fill="#c8c8c8"/>
</g>
<g transform="translate(500,385) scale(.33333)">
<path d="M38 28H64L51 46zM38 260H64L51 278zM38 490H64L51 508z" fill="#a8a8a8"/>
<g class="c" font-size="42" font-weight="bold" fill="#fff"><text x="90" y="52">重新塑造元素</text><text x="90" y="284">缝合</text><text x="90" y="516">炸开</text></g>
<use href="#grip" x="541" y="33"/><use href="#grip" x="541" y="265"/><use href="#grip" x="541" y="495"/>
<path d="M142 97H183L160 120V140L142 155V175H230V95H185" fill="#d0d0d0" stroke="#333" stroke-width="3"/>
<rect x="185" y="95" width="45" height="80" fill="#45c2c0" stroke="#333" stroke-width="3"/><path d="M185 122H230M185 150H230" stroke="#d0d0d0" stroke-width="5"/><path d="M160 113H185M160 135H185V155H142" stroke="#333" stroke-width="3" fill="none"/>
<path d="M290 93L330 112V150L300 175L262 170L247 145V112z" fill="#d0d0d0" stroke="#333" stroke-width="3"/><path d="M247 112L290 132L330 112M290 132V175" fill="none" stroke="#333" stroke-width="3"/>
<path d="M320 125L308 157H322L312 180L336 147H322L332 125z" fill="#45c2c0" stroke="#333" stroke-width="2"/>
<path d="M395 93L437 110V150L405 175L372 172L352 148V112z" fill="#d0d0d0" stroke="#333" stroke-width="3"/><path d="M352 112L395 132L437 110M395 132V175" fill="none" stroke="#333" stroke-width="3"/>
<use href="#tri" transform="translate(446,172) scale(2.800)"/>
<g stroke="#333" stroke-width="3" fill="#d0d0d0"><rect x="110" y="322" width="87" height="88"/><rect x="215" y="322" width="87" height="88"/><rect x="320" y="322" width="87" height="88"/><rect x="425" y="322" width="87" height="88"/></g>
<rect x="216" y="367" width="85" height="42" fill="#45c2c0"/><rect x="321" y="323" width="85" height="33" fill="#45c2c0"/>
<g fill="#d0d0d0" stroke="#333" stroke-width="3"><rect x="118" y="332" width="12" height="40" rx="6"/><rect x="146" y="332" width="12" height="40" rx="6"/><rect x="176" y="332" width="12" height="40" rx="6"/><rect x="222" y="347" width="12" height="40" rx="6"/><rect x="252" y="347" width="12" height="40" rx="6"/><rect x="282" y="347" width="12" height="40" rx="6"/><rect x="327" y="332" width="12" height="40" rx="6"/><rect x="357" y="332" width="12" height="40" rx="6"/><rect x="387" y="332" width="12" height="40" rx="6"/><rect x="432" y="347" width="12" height="40" rx="6"/><rect x="462" y="347" width="12" height="40" rx="6"/><rect x="492" y="347" width="12" height="40" rx="6"/></g>
<path d="M112 352H196M217 367H300M322 352H405M427 367H510" stroke="#333" stroke-width="3"/>
<circle cx="170" cy="384" r="17" fill="#d0d0d0" stroke="#45c2c0" stroke-width="7"/><path d="M170 358V372M170 396V410M144 384H158M182 384H196" stroke="#45c2c0" stroke-width="6"/>
<use href="#tri" transform="translate(520,416) scale(2.800)"/>
<!-- explode -->
<path d="M55 600L85 585L95 645H55zM145 600L113 585L100 645H145z" fill="#c8c8c8" stroke="#333" stroke-width="2"/><path d="M58 615L90 610M58 630L92 625M142 615L110 610M142 630L108 625" stroke="#333" stroke-width="2"/>
<path d="M95 645L85 580M102 645L115 580" stroke="#45c2c0" stroke-width="6"/><path d="M58 572L78 560V585zM142 572L122 560V585z" fill="#45c2c0"/><path d="M70 572H88M112 572H130" stroke="#45c2c0" stroke-width="5"/>
<path d="M165 562V635H208V605Q205 590 175 590" fill="none" stroke="#c8c8c8" stroke-width="11"/>
<rect x="208" y="607" width="40" height="40" fill="#f2a900" stroke="#222" stroke-width="2"/><path d="M214 615H242M226 615V640M214 640H242M234 625H242" stroke="#222" stroke-width="4" fill="none"/>
<rect x="265" y="560" width="76" height="78" fill="#c8c8c8" stroke="#333" stroke-width="3"/><path d="M265 585H341M265 610H341M290 560V585M315 560V585M277 585V638M303 585V638M328 585V610" stroke="#333" stroke-width="2"/>
<rect x="314" y="607" width="40" height="40" fill="#f2a900" stroke="#222" stroke-width="2"/><path d="M320 615H348M332 615V640M320 640H348M340 625H348" stroke="#222" stroke-width="4" fill="none"/>
<circle cx="408" cy="598" r="39" fill="#2e2e2e"/><g fill="#d8d8d8"><rect x="390" y="562" width="18" height="18"/><rect x="426" y="572" width="16" height="18"/><rect x="408" y="580" width="18" height="18"/><rect x="372" y="590" width="18" height="18"/><rect x="390" y="598" width="18" height="18"/><rect x="408" y="616" width="18" height="18"/></g>
<rect x="420" y="607" width="40" height="40" fill="#f2a900" stroke="#222" stroke-width="2"/><path d="M426 615H454M438 615V640M426 640H454M446 625H454" stroke="#222" stroke-width="4" fill="none"/>
<rect x="480" y="565" width="72" height="76" fill="#45c2c0" stroke="#333" stroke-width="3"/><path d="M500 565V641M500 600H552M525 600V641" stroke="#333" stroke-width="4" fill="none"/><path d="M480 590H500M480 615H500M525 625H552" stroke="#333" stroke-width="4"/>
<rect x="50" y="677" width="500" height="160" rx="8" fill="none" stroke="#3a3a3a" stroke-width="3"/>
<rect x="65" y="655" width="105" height="40" fill="#505050"/>
<g class="c" font-size="40" fill="#eee"><text x="74" y="692">焊接</text><text x="325" y="735" letter-spacing="2">阈值:</text></g>
<path d="M76 717L108 738M163 717L130 738" stroke="#2c2c2c" stroke-width="6"/><rect x="104" y="730" width="32" height="45" fill="#3a3a3a" stroke="#222" stroke-width="2"/><path d="M112 730V775M126 730V775" stroke="#222" stroke-width="2"/><circle cx="145" cy="772" r="14" fill="none" stroke="#2c2c2c" stroke-width="5"/>
<path d="M183 718H268L232 738H216z" fill="#c8c8c8" stroke="#333" stroke-width="2"/><rect x="212" y="730" width="30" height="50" fill="#45c2c0"/><path d="M222 730V780M232 730V780" stroke="#333" stroke-width="3"/><path d="M182 760L206 745V775zM268 760L244 745V775z" fill="#45c2c0"/><path d="M185 730V780M265 730V780" stroke="#333" stroke-width="2"/>
<rect x="322" y="758" width="153" height="40" fill="#5e5e5e"/><text x="332" y="787" class="m" font-size="36" fill="#ccc">0.01</text><path d="M455 770l7 9h-14z" fill="#ccc"/>
</g>
</g>

<!-- bottom rows -->
<rect x="25" y="646" width="681" height="2" fill="#333"/>
<rect x="25" y="683" width="681" height="2" fill="#333"/>
<rect x="420" y="648" width="1.500" height="35" fill="#333"/>
<rect x="187" y="685" width="1.500" height="36" fill="#333"/>
<rect x="25" y="721" width="681" height="1" fill="#333"/>
<use href="#plt" x="53" y="656"/><use href="#plt" x="32" y="666"/><use href="#plt" x="49.500" y="676"/>
<path d="M67 667L90 654L86 677z" fill="none" stroke="#45c2c0" stroke-width="2.500"/>
<rect x="97" y="650" width="33" height="33" rx="3" fill="#5b84bc"/><rect x="100.500" y="654" width="26" height="25" fill="#45c2c0" stroke="#333"/>
<rect x="137" y="663" width="2" height="12" fill="#ddd"/>
<rect x="144" y="650" width="33" height="33" rx="3" fill="#5b84bc"/>
<path d="M160.500 653L174 660V674L160.500 681L147 674V660z" fill="#45c2c0" stroke="#333"/><path d="M147 660L160.500 667L174 660M160.500 667V681" fill="none" stroke="#333"/>
<rect x="193.500" y="653.500" width="27" height="26" fill="none" stroke="#45c2c0" stroke-width="2" stroke-dasharray="7 4"/>
<rect x="193" y="667" width="13" height="13" fill="#d0d0d0"/><path d="M206 662h9M210.500 657.500v9" stroke="#eee" stroke-width="2"/>
<rect x="229" y="660" width="20" height="20" fill="none" stroke="#45c2c0" stroke-width="2" stroke-dasharray="6 4"/>
<rect x="228" y="667" width="13" height="13" fill="#d0d0d0"/><rect x="247" y="654" width="8" height="2" fill="#ccc"/>
<g fill="#3a3a3a"><rect x="262" y="654" width="8" height="6"/><rect x="272" y="654" width="8" height="6"/><rect x="282" y="654" width="9" height="6"/><rect x="262" y="672" width="8" height="6"/><rect x="272" y="672" width="8" height="6"/><rect x="282" y="672" width="9" height="6"/><rect x="297" y="654" width="9" height="6"/><rect x="308" y="654" width="8" height="6"/><rect x="318" y="654" width="9" height="6"/><rect x="297" y="672" width="9" height="6"/><rect x="332" y="654" width="9" height="6"/><rect x="343" y="654" width="8" height="6"/><rect x="353" y="654" width="9" height="6"/><rect x="332" y="672" width="9" height="6"/></g>
<g fill="none" stroke="#ccc"><rect x="263.500" y="664.500" width="6" height="3"/><rect x="273.500" y="664.500" width="6" height="3"/><rect x="283.500" y="664.500" width="6" height="3"/><rect x="298.500" y="664.500" width="6" height="3"/><rect x="308.500" y="664.500" width="6" height="3"/><rect x="319.500" y="664.500" width="6" height="3"/><rect x="333.500" y="664.500" width="6" height="3"/><rect x="343.500" y="664.500" width="6" height="3"/><rect x="354.500" y="664.500" width="6" height="3"/></g>
<path d="M318 664V680M310 672H327" stroke="#45c2c0" stroke-width="3.500"/><rect x="333" y="670" width="28" height="4" fill="#45c2c0"/>
<g fill="#3a3a3a"><rect x="370" y="654" width="6" height="23" rx="1"/><rect x="390" y="654" width="6" height="23" rx="1"/><rect x="404" y="654" width="6" height="23" rx="1"/></g>
<rect x="380" y="654" width="4.500" height="23" fill="#d0d0d0"/><rect x="416" y="654" width="4" height="17" fill="#d0d0d0"/><rect x="416" y="672" width="4" height="5" fill="#45c2c0"/>
<ellipse cx="439" cy="666.500" rx="14" ry="13" fill="none" stroke="#45c2c0" stroke-width="2.500" stroke-dasharray="5 3"/><circle cx="439" cy="666.500" r="6" fill="none" stroke="#888" stroke-dasharray="2 2"/>
<rect x="461.500" y="657" width="61.500" height="18" fill="#5a5a5a"/><text x="466" y="670" class="m" font-size="13" fill="#bbb">0.0</text>
<path d="M516 659.500l3.500 4h-7zM516 672.500l3.500-4h-7z" fill="#c8c8c8"/>
<path d="M535 678Q558 672 559 653" fill="none" stroke="#c8c8c8" stroke-width="2.500"/><use href="#tri" x="562" y="681"/>
<text x="567" y="674" font-size="22" font-weight="bold" fill="#c8c8c8">XY</text><use href="#tri" x="600" y="681"/>
<rect x="606" y="663" width="2" height="12" fill="#ddd"/>
<rect x="613" y="650" width="34" height="33" rx="3" fill="#5b84bc"/>
<circle cx="630" cy="666.500" r="12.500" fill="none" stroke="#c8c8c8" stroke-width="4" stroke-dasharray="5 2"/>
<path d="M618 666.500H642M622 661V672M630 660V673M638 661V672" stroke="#45c2c0" stroke-width="3"/>
<rect x="652.500" y="657" width="40.500" height="18" fill="#5a5a5a"/><text x="655" y="670" class="m" font-size="13" fill="#bbb">16</text>
<path d="M685 659.500l3.500 4h-7zM685 672.500l3.500-4h-7z" fill="#c8c8c8"/>
<!-- row 2 -->
<rect x="27" y="687" width="33" height="33" rx="3" fill="#5b84bc"/>
<circle cx="36" cy="696" r="5" fill="none" stroke="#e0e0e0" stroke-width="2.500"/><path d="M36 701V712M41 696H52" stroke="#e0e0e0" stroke-width="3"/><path d="M30 711H42L36 718zM51 691L58 696L51 701z" fill="#e0e0e0" stroke="#333" stroke-width=".5"/>
<rect x="67" y="698" width="2" height="13" fill="#ddd"/>
<text x="78" y="710" font-size="14" fill="#eee">U:</text><rect x="95" y="693" width="36" height="20" fill="#575757"/>
<text x="155" y="710" font-size="14" fill="#eee">V:</text><rect x="176" y="693" width="10" height="20" fill="#575757"/>
<path d="M199 701v-5a6.500 6.500 0 0 1 13 0v5" fill="none" stroke="#d0d0d0" stroke-width="3"/><rect x="195" y="701" width="21" height="16" rx="1.500" fill="#d0d0d0"/><circle cx="205.500" cy="707" r="2.300" fill="#333"/><rect x="204.500" y="708" width="2" height="6" fill="#333"/>
<path d="M228 716L250 691V716z" fill="#d0d0d0"/><path d="M239 712Q247 703 255 712Q247 720 239 712z" fill="#f2a900"/><circle cx="247" cy="712" r="2.500" fill="#222"/>
<rect x="264" y="698" width="2" height="13" fill="#ddd"/>
<path d="M273 703Q287 684 302 703Q287 722 273 703z" fill="#383838"/><use href="#tri" x="304" y="719"/>
<g stroke="#d0d0d0" stroke-width="2" fill="none"><path d="M322 690V716M310.500 696.500L333.500 709.500M333.500 696.500L310.500 709.500M317 691l5 5 5-5M317 715l5-5 5 5M310 702l7 3-1-7M334 702l-7 3 1-7M310 704l7-3-1 7M334 704l-7-3 1 7"/></g><use href="#tri" x="339" y="719"/>
<rect x="352" y="693" width="174" height="21" fill="#5c5c5c"/><text x="361" y="709" class="m" font-size="13" fill="#ddd" xml:space="preserve">所有 ID</text><path d="M508 700h9l-4.500 7z" fill="#ddd"/>
<path d="M537 703V697a1.500 1.500 0 0 1 3 0V704V692a1.500 1.500 0 0 1 3 0V703V690a1.500 1.500 0 0 1 3 0V703V692a1.500 1.500 0 0 1 3 0V705V696a1.500 1.500 0 0 1 3 0V707Q552 717 547 717H542L534 706a1.500 1.500 0 0 1 3-3z" fill="#e0e0e0"/>
<circle cx="582" cy="699" r="8" fill="none" stroke="#d0d0d0" stroke-width="3"/><path d="M576 706L567 715" stroke="#d0d0d0" stroke-width="4" stroke-linecap="round"/>
<rect x="601" y="690" width="27" height="20" fill="none" stroke="#d0d0d0" stroke-width="2" stroke-dasharray="5 3"/><circle cx="610" cy="708" r="5" fill="#464646" stroke="#d0d0d0" stroke-width="2"/><path d="M606 712L601 717" stroke="#45c2c0" stroke-width="3"/>
<path d="M649 692L660 698V711L649 717L638 711V698z" fill="none" stroke="#c8c8c8" stroke-width="1.500"/><path d="M638 698L649 704L660 698M649 704V717" fill="none" stroke="#c8c8c8" stroke-width="1.500"/>
<path d="M635 694V689H640M658 689H663V694M635 712V717H640M658 717H663V712" fill="none" stroke="#d0d0d0" stroke-width="1.500"/><use href="#tri" x="666" y="720"/>
<path d="M682 700L687 695Q692 690 695 695Q698 702 690 708L684 716" fill="none" stroke="#d0d0d0" stroke-width="4"/><path d="M672 702L678 694" stroke="#d0d0d0" stroke-width="4" stroke-dasharray="3 2"/><use href="#tri" x="704" y="720"/>
</svg>
</body></html>
